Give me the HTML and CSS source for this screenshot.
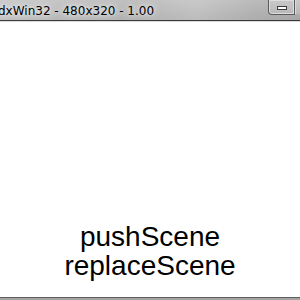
FILE: index.html
```html
<!DOCTYPE html>
<html>
<head>
<meta charset="utf-8">
<link rel="stylesheet" href="styles.css">
</head>
<body>
<div class="window">
  <div class="titlebar">
    <span class="title">dxWin32 - 480x320 - 1.00</span>
    <div class="buttons">
      <div class="btn-min"><span class="min-bar"></span></div>
      <div class="btn-next"></div>
    </div>
  </div>
  <div class="content">
    <div class="menu">
      <div class="item">pushScene</div>
      <div class="item">replaceScene</div>
    </div>
  </div>
  <div class="frame-bottom"></div>
</div>
</body>
</html>
```
FILE: styles.css
```css
html, body {
  margin: 0;
  padding: 0;
  width: 300px;
  height: 300px;
  overflow: hidden;
}
.window {
  display: flex;
  flex-direction: column;
  width: 300px;
  height: 300px;
}
.titlebar {
  position: relative;
  height: 20px;
  flex: none;
  background:
    linear-gradient(to bottom, rgba(255,255,255,0.12), rgba(0,0,0,0.03)),
    linear-gradient(to right, #c4c4c4 0%, #bababa 30%, #b6b6b6 45%, #c2c2c2 65%, #b2b2b2 85%, #acacac 100%);
  border-bottom: 1px solid #3a3a3a;
  display: flex;
  align-items: center;
}
.title {
  font-family: "DejaVu Sans", sans-serif;
  font-size: 12px;
  color: #000;
  margin-left: -2px;
  margin-top: 1px;
  text-shadow: 0 0 8px rgba(255,255,255,0.9), 0 0 4px rgba(255,255,255,0.8);
  white-space: nowrap;
}
.buttons {
  position: absolute;
  top: 0;
  left: 268px;
  display: flex;
}
.btn-min {
  width: 25px;
  height: 14px;
  border: 1px solid #5a5a5a;
  border-top: none;
  border-radius: 0 0 0 4px;
  background: linear-gradient(#c9c9c9, #b9b9b9);
  display: flex;
  align-items: center;
  justify-content: center;
  box-shadow: inset 0 0 0 1px #dcdcdc;
}
.min-bar {
  display: block;
  width: 8px;
  height: 2px;
  border: 1px solid #3c3c3c;
  background: #fff;
  margin-top: 2px;
}
.btn-next {
  width: 10px;
  height: 14px;
  border-left: 1px solid #dcdcdc;
  background: linear-gradient(#c9c9c9, #b9b9b9);
}
.content {
  flex: 1;
  background: #fff;
  border-top: 1px solid #d8d8d8;
  display: flex;
  flex-direction: column;
  justify-content: flex-end;
  padding-bottom: 17px;
}
.menu {
  display: flex;
  flex-direction: column;
  align-items: center;
}
.item {
  font-family: "Liberation Sans", Arial, sans-serif;
  font-size: 28px;
  line-height: 29px;
  color: #000;
}
.frame-bottom {
  height: 2px;
  flex: none;
  border-top: 1px solid #5e5e5e;
  background: #a4a4a4;
}
```
